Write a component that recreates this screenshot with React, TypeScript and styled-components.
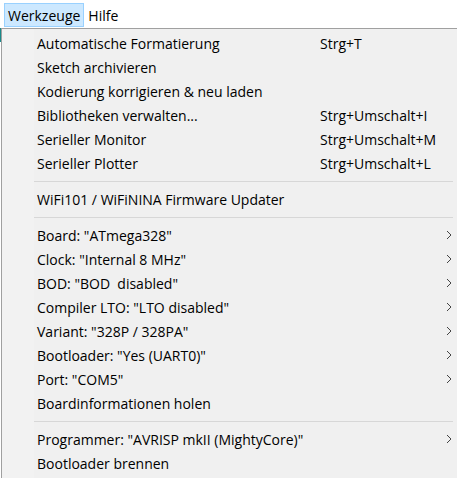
import styled, { createGlobalStyle } from "styled-components";

const GlobalStyle = createGlobalStyle`
	html, body {
		margin: 0;
		padding: 0;
		background: #ffffff;
		overflow: hidden;
	}
	body {
		font-family: "Open Sans", "Noto Sans", sans-serif;
		font-size: 14px;
		color: #000;
	}
`;

type Item =
	| { kind: "item"; label: string; shortcut?: string; sub?: boolean }
	| { kind: "sep" };

const items: Item[] = [
	{ kind: "item", label: "Automatische Formatierung", shortcut: "Strg+T" },
	{ kind: "item", label: "Sketch archivieren" },
	{ kind: "item", label: "Kodierung korrigieren & neu laden" },
	{ kind: "item", label: "Bibliotheken verwalten...", shortcut: "Strg+Umschalt+I" },
	{ kind: "item", label: "Serieller Monitor", shortcut: "Strg+Umschalt+M" },
	{ kind: "item", label: "Serieller Plotter", shortcut: "Strg+Umschalt+L" },
	{ kind: "sep" },
	{ kind: "item", label: "WiFi101 / WiFiNINA Firmware Updater" },
	{ kind: "sep" },
	{ kind: "item", label: 'Board: "ATmega328"', sub: true },
	{ kind: "item", label: 'Clock: "Internal 8 MHz"', sub: true },
	{ kind: "item", label: 'BOD: "BOD  disabled"', sub: true },
	{ kind: "item", label: 'Compiler LTO: "LTO disabled"', sub: true },
	{ kind: "item", label: 'Variant: "328P / 328PA"', sub: true },
	{ kind: "item", label: 'Bootloader: "Yes (UART0)"', sub: true },
	{ kind: "item", label: 'Port: "COM5"', sub: true },
	{ kind: "item", label: "Boardinformationen holen" },
	{ kind: "sep" },
	{ kind: "item", label: 'Programmer: "AVRISP mkII (MightyCore)"', sub: true },
	{ kind: "item", label: "Bootloader brennen" },
];

const Page = styled.div`
	width: 457px;
	height: 478px;
	display: flex;
	flex-direction: column;
	background: #ffffff;
`;

const MenuBar = styled.div`
	height: 28px;
	display: flex;
	align-items: center;
	padding-left: 4px;
	background: #ffffff;
	flex-shrink: 0;
`;

const BarItem = styled.div<{ $open?: boolean }>`
	height: 22px;
	display: flex;
	align-items: center;
	padding: 0 3px;
	margin-top: 2px;
	white-space: pre;
	border: 1px solid ${(p) => (p.$open ? "#99d1ff" : "transparent")};
	background: ${(p) => (p.$open ? "#cce8ff" : "transparent")};
`;

const Body = styled.div`
	flex: 1;
	display: flex;
	min-height: 0;
`;

const Edge = styled.div`
	width: 1px;
	background: linear-gradient(#1a8a8a 0 14px, #ffffff 14px);
	flex-shrink: 0;
`;

const Dropdown = styled.div`
	flex: 1;
	height: 449px;
	border-top: 1px solid #a0a0a0;
	border-left: 1px solid #a0a0a0;
	border-bottom: 1px solid #a0a0a0;
	padding: 2px 0 0 0;
	background: linear-gradient(90deg, #f2f2f2 0 32px, #f0f0f0 32px);
	display: flex;
	flex-direction: column;
`;

const Row = styled.div`
	height: 24px;
	display: grid;
	grid-template-columns: 283px 1fr 11px;
	align-items: center;
	padding-left: 35px;
	white-space: pre;
`;

const Shortcut = styled.span``;

const Chevron = styled.svg`
	width: 6px;
	height: 10px;
	justify-self: start;
`;

const Separator = styled.div`
	height: 12px;
	display: flex;
	align-items: center;
	padding-left: 32px;
	padding-right: 4px;

	&::after {
		content: "";
		flex: 1;
		height: 1px;
		background: #d7d7d7;
	}
`;

export default function App() {
	return (
		<>
			<GlobalStyle />
			<Page>
				<MenuBar>
					<BarItem $open>Werkzeuge</BarItem>
					<BarItem>Hilfe</BarItem>
				</MenuBar>
				<Body>
					<Edge />
					<Dropdown>
						{items.map((it, i) =>
							it.kind === "sep" ? (
								<Separator key={i} />
							) : (
								<Row key={i}>
									<span>{it.label}</span>
									<Shortcut>{it.shortcut ?? ""}</Shortcut>
									{it.sub ? (
										<Chevron viewBox="0 0 6 10">
											<polyline points="1,1 5,5 1,9" fill="none" stroke="#444" strokeWidth="1" />
										</Chevron>
									) : (
										<span />
									)}
								</Row>
							)
						)}
					</Dropdown>
				</Body>
			</Page>
		</>
	);
}
